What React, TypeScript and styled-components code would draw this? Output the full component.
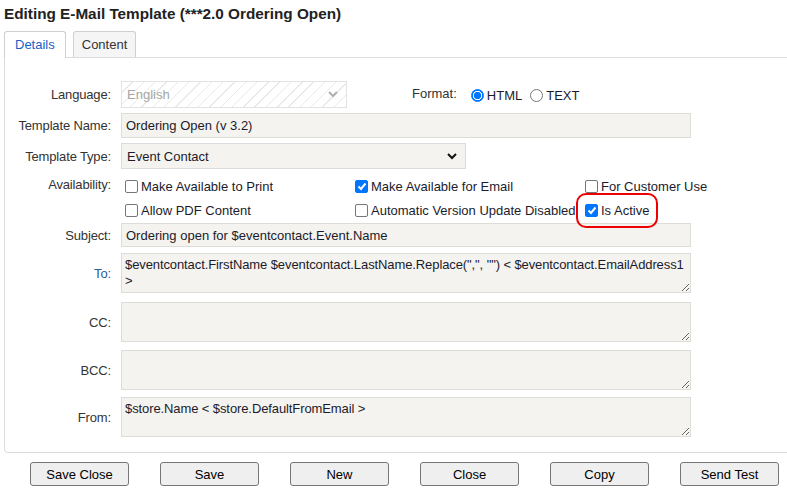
import React from "react";
import styled, { createGlobalStyle } from "styled-components";

const GlobalStyle = createGlobalStyle`
  html, body {
    margin: 0;
    padding: 0;
    overflow: hidden;
    background: #fff;
  }
  body {
    font-family: "Liberation Sans", Arial, sans-serif;
    font-size: 13px;
    color: #333;
  }
`;

const Page = styled.div`
  padding-left: 4px;
  width: 830px;
`;

const Title = styled.h1`
  margin: 0;
  padding-top: 5px;
  font-size: 15.3px;
  line-height: 18px;
  font-weight: bold;
  color: #222;
`;

const TabBar = styled.div`
  display: flex;
  gap: 7px;
  height: 26px;
  margin-top: 8px;
`;

const Tab = styled.div<{ $active?: boolean }>`
  position: relative;
  z-index: 1;
  box-sizing: border-box;
  height: ${(p) => (p.$active ? "27px" : "26px")};
  padding: 0 ${(p) => (p.$active ? "10px" : "8px")};
  border: 1px solid #cfcfcf;
  border-bottom: none;
  border-radius: 3px 3px 0 0;
  background: ${(p) => (p.$active ? "#fff" : "#f5f5f5")};
  color: ${(p) => (p.$active ? "#1762c5" : "#333")};
  line-height: 26px;
  font-size: 13px;
`;

const Panel = styled.div`
  border: 1px solid #dcdcdc;
  border-radius: 0 0 0 4px;
  padding: 23px 0 15px 0;
`;

const Row = styled.div<{ $mt?: number }>`
  display: grid;
  grid-template-columns: 106px 1fr;
  column-gap: 10px;
  margin-top: ${(p) => p.$mt ?? 0}px;
`;

const Label = styled.div<{ $top?: boolean; $link?: boolean }>`
  text-align: right;
  align-self: ${(p) => (p.$top ? "start" : "center")};
  padding-top: ${(p) => (p.$top ? "3px" : "0")};
  color: ${(p) => (p.$link ? "#2e5c9c" : "#333")};
  line-height: 15px;
  letter-spacing: -0.15px;
`;

const FieldLine = styled.div`
  display: flex;
  align-items: center;
`;

const SelectBox = styled.div<{ $width: number; $height: number; $disabled?: boolean }>`
  box-sizing: border-box;
  width: ${(p) => p.$width}px;
  height: ${(p) => p.$height}px;
  display: flex;
  align-items: center;
  justify-content: space-between;
  padding: 0 8px 0 5px;
  border: 1px solid ${(p) => (p.$disabled ? "#e3e3e3" : "#dcdcdc")};
  color: ${(p) => (p.$disabled ? "#a6a6a6" : "#1b1b2b")};
  background: ${(p) =>
    p.$disabled
      ? "repeating-linear-gradient(135deg, #fff 0 7px, #e9e9e9 7px 8px)"
      : "#f4f3ef"};
`;

const TextInput = styled.input`
  box-sizing: border-box;
  width: 570px;
  height: ${(p) => p.height ?? 25}px;
  padding: 0 4px;
  border: 1px solid #dedcd6;
  background: #f4f3ef;
  color: #1b1b2b;
  font-family: "Liberation Sans", Arial, sans-serif;
  font-size: 13px;
  outline: none;
`;

const TextArea = styled.textarea`
  box-sizing: border-box;
  width: 570px;
  height: 40px;
  padding: 3px 3px;
  border: 1px solid #dedcd6;
  background: #f4f3ef;
  color: #1b1b2b;
  font-family: "Liberation Sans", Arial, sans-serif;
  font-size: 13px;
  line-height: 16px;
  letter-spacing: -0.1px;
  white-space: pre;
  overflow: hidden;
  outline: none;
  display: block;
`;

const FormatGroup = styled.div`
  display: flex;
  align-items: center;
  margin-left: 65px;
`;

const FormatLabel = styled.span`
  color: #333;
  margin-right: 14px;
  margin-top: -2px;
`;

const RadioItem = styled.span`
  display: inline-flex;
  align-items: center;
  gap: 3px;
  margin-right: 8px;
  color: #1b1b2b;
  margin-top: 2px;
`;

const RadioDot = styled.span<{ $on?: boolean }>`
  box-sizing: border-box;
  width: 13px;
  height: 13px;
  border-radius: 50%;
  border: 1px solid ${(p) => (p.$on ? "#0075ff" : "#767676")};
  background: ${(p) =>
    p.$on
      ? "radial-gradient(circle, #0075ff 0 3.4px, #fff 4px 4.4px, #0075ff 5px)"
      : "#fff"};
`;

const CheckGrid = styled.div`
  display: grid;
  grid-template-columns: 230px 230px auto;
  grid-auto-rows: 24px;
  padding-left: 4px;
`;

const CheckItem = styled.span`
  display: inline-flex;
  align-items: center;
  gap: 3px;
  color: #1b1b2b;
  align-self: center;
  justify-self: start;
  line-height: 15px;
`;

const Highlight = styled(CheckItem)`
  position: relative;
  z-index: 2;
  padding: 2px 1px;
  margin-left: -1px;
  border-radius: 2px;
  outline: 2px solid #ee0000;
  outline-offset: 6px;
`;

const Box = styled.span<{ $on?: boolean }>`
  box-sizing: border-box;
  width: 13px;
  height: 13px;
  border-radius: 2px;
  border: 1px solid ${(p) => (p.$on ? "#0075ff" : "#767676")};
  background: ${(p) => (p.$on ? "#0075ff" : "#fff")};
  display: flex;
  align-items: center;
  justify-content: center;
`;

const ButtonRow = styled.div`
  display: flex;
  gap: 31px;
  padding-left: 26px;
  margin-top: 9px;
`;

const Button = styled.button`
  box-sizing: border-box;
  width: 99px;
  height: 24px;
  padding: 0;
  border: 1px solid #767676;
  border-radius: 3px;
  background: #efefef;
  color: #000;
  font-family: "Liberation Sans", Arial, sans-serif;
  font-size: 13px;
`;

const Chevron = ({ color }: { color: string }) => (
  <svg width="10" height="7" viewBox="0 0 10 7">
    <polyline points="1,1 5,5 9,1" fill="none" stroke={color} strokeWidth="2" />
  </svg>
);

const Check = ({ on, children }: { on?: boolean; children: React.ReactNode }) => (
  <>
    <Box $on={on}>
      {on && (
        <svg width="10" height="9" viewBox="0 0 10 9">
          <polyline points="1.5,4.5 4,7 8.5,1.5" fill="none" stroke="#fff" strokeWidth="2" />
        </svg>
      )}
    </Box>
    {children}
  </>
);

const toValue =
  '$eventcontact.FirstName $eventcontact.LastName.Replace(",", "") < $eventcontact.EmailAddress1\n>';

export default function App() {
  return (
    <Page>
      <GlobalStyle />
      <Title>Editing E-Mail Template (***2.0 Ordering Open)</Title>
      <TabBar>
        <Tab $active>Details</Tab>
        <Tab>Content</Tab>
      </TabBar>
      <Panel>
        <Row>
          <Label>Language:</Label>
          <FieldLine>
            <SelectBox $width={226} $height={27} $disabled>
              <span>English</span>
              <Chevron color="#b0b0b0" />
            </SelectBox>
            <FormatGroup>
              <FormatLabel>Format:</FormatLabel>
              <RadioItem>
                <RadioDot $on />
                HTML
              </RadioItem>
              <RadioItem>
                <RadioDot />
                TEXT
              </RadioItem>
            </FormatGroup>
          </FieldLine>
        </Row>
        <Row $mt={5}>
          <Label>Template Name:</Label>
          <TextInput readOnly value="Ordering Open (v 3.2)" />
        </Row>
        <Row $mt={5}>
          <Label>Template Type:</Label>
          <SelectBox $width={345} $height={26}>
            <span>Event Contact</span>
            <Chevron color="#111" />
          </SelectBox>
        </Row>
        <Row $mt={5}>
          <Label $top>Availability:</Label>
          <CheckGrid>
            <CheckItem>
              <Check>Make Available to Print</Check>
            </CheckItem>
            <CheckItem>
              <Check on>Make Available for Email</Check>
            </CheckItem>
            <CheckItem>
              <Check>For Customer Use</Check>
            </CheckItem>
            <CheckItem>
              <Check>Allow PDF Content</Check>
            </CheckItem>
            <CheckItem>
              <Check>Automatic Version Update Disabled</Check>
            </CheckItem>
            <Highlight>
              <Check on>Is Active</Check>
            </Highlight>
          </CheckGrid>
        </Row>
        <Row $mt={1}>
          <Label>Subject:</Label>
          <TextInput readOnly height={24} value="Ordering open for $eventcontact.Event.Name" />
        </Row>
        <Row $mt={6}>
          <Label $link>To:</Label>
          <TextArea readOnly value={toValue} />
        </Row>
        <Row $mt={9}>
          <Label>CC:</Label>
          <TextArea readOnly value="" />
        </Row>
        <Row $mt={8}>
          <Label>BCC:</Label>
          <TextArea readOnly value="" />
        </Row>
        <Row $mt={7}>
          <Label>From:</Label>
          <TextArea readOnly value="$store.Name < $store.DefaultFromEmail >" />
        </Row>
      </Panel>
      <ButtonRow>
        <Button>Save Close</Button>
        <Button>Save</Button>
        <Button>New</Button>
        <Button>Close</Button>
        <Button>Copy</Button>
        <Button>Send Test</Button>
      </ButtonRow>
    </Page>
  );
}
